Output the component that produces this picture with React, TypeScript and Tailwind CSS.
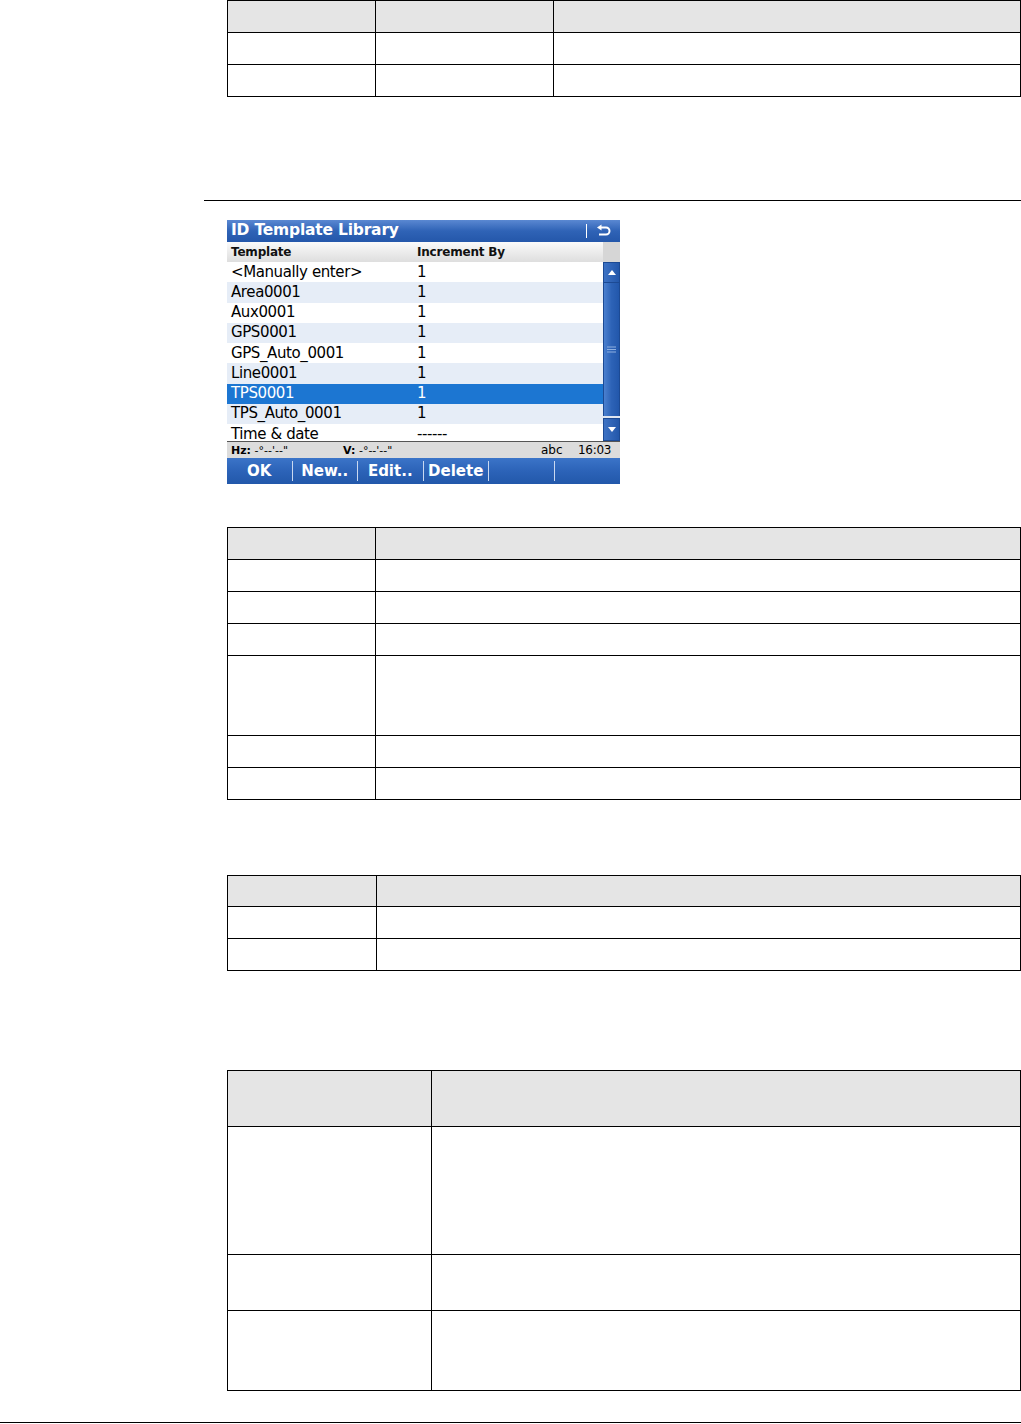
import React from 'react';

const font = { fontFamily: '"DejaVu Sans", Verdana, sans-serif' };

// rows are given as line-to-line pitch in px
function DocTable({ cols, rows, header = 1 }: { cols: number[]; rows: number[]; header?: number }) {
  return (
    <div className="w-[794px] border border-black">
      {rows.map((p, i) => (
        <div
          key={i}
          className={`flex ${i > 0 ? 'border-t border-black' : ''} ${i < header ? 'bg-[#e5e5e5]' : 'bg-white'}`}
          style={{ height: i === 0 ? p - 1 : p }}
        >
          {cols.map((w, j) => (
            <div key={j} className={`${j > 0 ? 'border-l border-black' : ''} shrink-0`} style={{ width: w }} />
          ))}
          <div className="flex-1 border-l border-black" />
        </div>
      ))}
    </div>
  );
}

const items = [
  { name: '<Manually enter>', inc: '1' },
  { name: 'Area0001', inc: '1' },
  { name: 'Aux0001', inc: '1' },
  { name: 'GPS0001', inc: '1' },
  { name: 'GPS_Auto_0001', inc: '1' },
  { name: 'Line0001', inc: '1' },
  { name: 'TPS0001', inc: '1', sel: true },
  { name: 'TPS_Auto_0001', inc: '1' },
  { name: 'Time & date', inc: '------' },
];

function Device() {
  return (
    <div className="w-[393px] h-[264px] flex flex-col overflow-hidden" style={font}>
      {/* title bar */}
      <div className="h-[22px] flex items-center bg-gradient-to-b from-[#5a88d2] via-[#2f63b6] to-[#2457aa] text-white">
        <span className="pl-[4px] text-[15.5px] font-bold leading-none tracking-[-0.2px]">ID Template Library</span>
        <div className="flex-1" />
        <div className="w-px h-[14px] bg-white mr-[9px]" />
        <svg width="16" height="14" viewBox="0 0 16 14" className="mr-[8px]">
          <path d="M4 3.5 H10 A3.5 3.5 0 0 1 10 10.5 H3" fill="none" stroke="white" strokeWidth="2" />
          <path d="M1 3.5 L5.5 0.5 L5.5 6.5 Z" fill="white" />
        </svg>
      </div>
      {/* column header */}
      <div className="h-[20px] flex bg-gradient-to-b from-[#fafafa] to-[#dedede] text-[12px] font-bold text-[#111] leading-none">
        <div className="w-[376px] flex items-center">
          <span className="pl-[4px] w-[190px] tracking-[-0.2px]">Template</span>
          <span className="tracking-[-0.2px]">Increment By</span>
        </div>
        <div className="flex-1 bg-[#d6d6d6]" />
      </div>
      {/* list + scrollbar */}
      <div className="h-[179px] flex overflow-hidden">
        <div className="w-[376px] flex flex-col">
          {items.map((it, i) => (
            <div
              key={i}
              className={`h-[20.25px] shrink-0 flex items-center text-[15px] leading-none ${
                it.sel ? 'bg-[#1c76d2] text-white' : i % 2 === 1 ? 'bg-[#e6edf7] text-black' : 'bg-white text-black'
              }`}
              style={{ fontFamily: '"DejaVu Sans", Tahoma, sans-serif', letterSpacing: '-0.4px' }}
            >
              <span className="pl-[4px] w-[190px] shrink-0">{it.name}</span>
              <span>{it.inc}</span>
            </div>
          ))}
        </div>
        <div className="w-[17px] flex flex-col bg-[#b8c9e6]">
          <div className="h-[21px] flex items-center justify-center bg-gradient-to-r from-[#3d72c4] to-[#2357aa] border border-[#1c4a94]">
            <svg width="8" height="5" viewBox="0 0 8 5"><path d="M0 5 L4 0 L8 5 Z" fill="white" /></svg>
          </div>
          <div className="h-[133px] flex items-center justify-center bg-gradient-to-r from-[#4b80cf] via-[#2d63b7] to-[#2257ab] border-x border-[#1c4a94]">
            <svg width="9" height="7" viewBox="0 0 9 7">
              <path d="M0 1 H9 M0 3.5 H9 M0 6 H9" stroke="#8fb0e0" strokeWidth="1" />
            </svg>
          </div>
          <div className="h-[2px] bg-[#dfe6f1]" />
          <div className="flex-1 flex items-center justify-center bg-gradient-to-r from-[#3d72c4] to-[#2357aa] border border-[#1c4a94]">
            <svg width="8" height="5" viewBox="0 0 8 5"><path d="M0 0 L8 0 L4 5 Z" fill="white" /></svg>
          </div>
        </div>
      </div>
      {/* status bar */}
      <div className="h-[17px] flex items-center bg-[#dcdcdc] border-t border-[#555] text-[11px] text-black leading-none">
        <span className="pl-[4px] w-[116px] shrink-0">
          <b>Hz:</b> -°--'--"
        </span>
        <span className="w-[198px] shrink-0">
          <b>V:</b> -°--'--"
        </span>
        <span className="w-[37px] shrink-0 text-[12px]">abc</span>
        <span className="text-[12px] tracking-[-0.3px]">16:03</span>
      </div>
      {/* softkeys */}
      <div className="h-[26px] flex bg-gradient-to-b from-[#3b74c8] via-[#2c63b8] to-[#2258aa] text-white text-[15px] font-bold leading-none">
        {['OK', 'New..', 'Edit..', 'Delete', '', ''].map((k, i) => (
          <div key={i} className="flex-1 flex items-center">
            <span className="flex-1 text-center">{k}</span>
            {i < 5 && <div className="w-px h-[20px] bg-[#c9d8f0]" />}
          </div>
        ))}
      </div>
    </div>
  );
}

export default function App() {
  return (
    <div className="w-[1021px] h-[1424px] bg-white flex flex-col">
      <div className="pl-[227px]">
        <DocTable cols={[147, 178]} rows={[32, 32, 32]} />
      </div>

      <div className="ml-[204px] mt-[103px] h-px w-[817px] bg-black" />

      <div className="pl-[227px] mt-[19px]">
        <Device />
      </div>

      <div className="pl-[227px] mt-[43px]">
        <DocTable cols={[147]} rows={[32, 32, 32, 32, 80, 32, 32]} />
      </div>

      <div className="pl-[227px] mt-[75px]">
        <DocTable cols={[148]} rows={[31, 32, 32]} />
      </div>

      <div className="pl-[227px] mt-[99px]">
        <DocTable cols={[203]} rows={[56, 128, 56, 80]} />
      </div>

      <div className="mt-[31px] h-px w-full bg-black" />
    </div>
  );
}
